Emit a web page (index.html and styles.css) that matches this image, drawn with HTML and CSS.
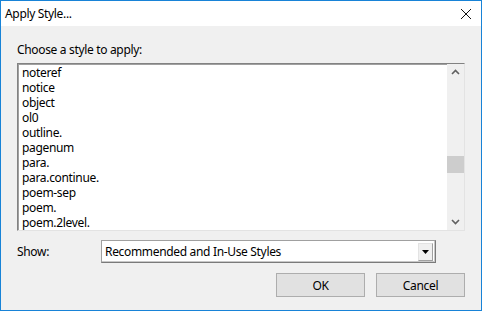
FILE: index.html
```html
<!DOCTYPE html>
<html lang="en">
<head>
    <meta charset="UTF-8">
    <title>Apply Style...</title>
    <link rel="stylesheet" href="styles.css">
</head>
<body>
    <div class="window">
        <div class="titlebar">
            <span class="title">Apply Style...</span>
            <svg class="close" width="12" height="12" viewBox="0 0 12 12">
                <path d="M1 1 L11 11 M11 1 L1 11" stroke="#111" stroke-width="1" fill="none"/>
            </svg>
        </div>

        <div class="content">
            <p class="label">Choose a style to apply:</p>

            <div class="listbox">
                <ul class="items">
                    <li>noteref</li>
                    <li>notice</li>
                    <li>object</li>
                    <li>ol0</li>
                    <li>outline.</li>
                    <li>pagenum</li>
                    <li>para.</li>
                    <li>para.continue.</li>
                    <li>poem-sep</li>
                    <li>poem.</li>
                    <li>poem.2level.</li>
                </ul>
                <div class="scrollbar">
                    <svg class="arrow" width="17" height="17" viewBox="0 0 17 17">
                        <path d="M5 10 L8.5 6.5 L12 10" stroke="#606060" stroke-width="1.6" fill="none"/>
                    </svg>
                    <div class="track">
                        <div class="thumb"></div>
                    </div>
                    <svg class="arrow" width="17" height="17" viewBox="0 0 17 17">
                        <path d="M5 7 L8.5 10.5 L12 7" stroke="#606060" stroke-width="1.6" fill="none"/>
                    </svg>
                </div>
            </div>

            <div class="show-row">
                <span class="show-label">Show:</span>
                <div class="combo">
                    <span class="combo-text">Recommended and In-Use Styles</span>
                    <div class="drop">
                        <svg width="7" height="4" viewBox="0 0 7 4">
                            <path d="M0 0 L7 0 L3.5 4 Z" fill="#000"/>
                        </svg>
                    </div>
                </div>
            </div>

            <div class="buttons">
                <button class="btn">OK</button>
                <button class="btn">Cancel</button>
            </div>
        </div>
    </div>
</body>
</html>
```

FILE: styles.css
```css
* {
    margin: 0;
    padding: 0;
    box-sizing: border-box;
}

body {
    background: #f0f0f0;
    font-family: 'Noto Sans', sans-serif;
    font-size: 12px;
    letter-spacing: -0.33px;
    color: #000;
}

/* Dialog frame */
.window {
    width: 482px;
    height: 311px;
    border: 1px solid #1883d7;
    background: #f0f0f0;
    display: flex;
    flex-direction: column;
}

.titlebar {
    height: 25px;
    background: #fff;
    display: flex;
    align-items: center;
    justify-content: space-between;
    padding: 0 9px 0 4px;
}

.title {
    font-size: 12px;
    line-height: 15px;
}

.close {
    display: block;
}

.content {
    padding: 16px 16px 0 16px;
}

.label {
    line-height: 15px;
    margin-bottom: 6px;
}

/* Style list */
.listbox {
    height: 168px;
    background: #fff;
    border: 1px solid #828282;
    border-right-color: #e3e3e3;
    border-bottom-color: #e3e3e3;
    box-shadow: inset 1px 1px 0 #a0a0a0;
    display: flex;
    overflow: hidden;
}

.items {
    list-style: none;
    flex: 1;
    padding: 1px 0 0 4px;
    overflow: hidden;
}

.items li {
    line-height: 15px;
    height: 15px;
    white-space: nowrap;
}

.scrollbar {
    width: 17px;
    background: #f0f0f0;
    display: flex;
    flex-direction: column;
}

.arrow {
    display: block;
    flex: none;
}

.track {
    flex: 1;
    padding-top: 75px;
}

.thumb {
    height: 17px;
    background: #cdcdcd;
}

/* Show row */
.show-row {
    display: flex;
    align-items: center;
    margin-top: 9px;
}

.show-label {
    width: 84px;
    line-height: 15px;
}

.combo {
    width: 335px;
    height: 23px;
    background: #fff;
    border: 1px solid #7a7a7a;
    border-top-color: #a0a0a0;
    border-left-color: #a0a0a0;
    box-shadow: inset -1px -1px 0 #c8c8c8;
    display: flex;
    align-items: center;
    justify-content: space-between;
    padding: 0 2px 0 3px;
}

.combo-text {
    line-height: 15px;
}

.drop {
    width: 15px;
    height: 18px;
    background: #f0f0f0;
    border: 1px solid #e3e3e3;
    border-right-color: #a0a0a0;
    border-bottom-color: #a0a0a0;
    display: flex;
    align-items: center;
    justify-content: center;
}

.drop svg {
    display: block;
}

/* Buttons */
.buttons {
    display: flex;
    justify-content: flex-end;
    gap: 11px;
    margin-top: 10px;
}

.btn {
    width: 89px;
    height: 24px;
    background: #e1e1e1;
    border: 1px solid #adadad;
    font-family: 'Noto Sans', sans-serif;
    font-size: 12px;
    letter-spacing: -0.33px;
    color: #000;
}
```
